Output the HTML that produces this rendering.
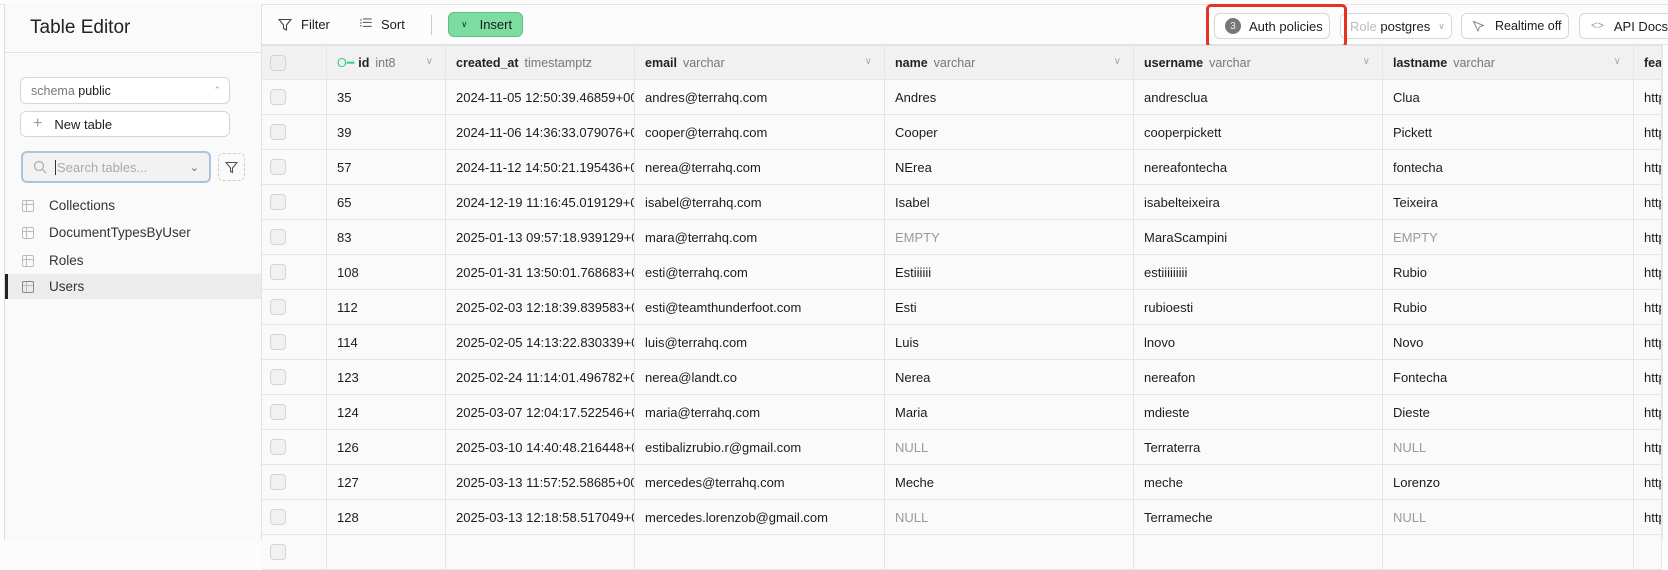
<!DOCTYPE html>
<html><head><meta charset="utf-8"><style>
*{box-sizing:border-box;margin:0;padding:0}
body{width:1668px;height:540px;overflow:hidden;background:#fcfcfc;font-family:"Liberation Sans",sans-serif;color:#1c1c1c;position:relative}
.a{position:absolute}
.topline{left:0;top:4px;width:1668px;height:1px;background:#e4e4e4}
.side{left:4px;top:4px;width:258px;height:536px;border-left:1px solid #dcdcdc;border-right:1px solid #e2e2e2;background:#fafafa}
.btn{position:absolute;border:1px solid #d6d6d6;border-radius:6px;background:#fff;font-size:13px;display:flex;align-items:center;white-space:nowrap}
.grid{position:absolute;left:262px;top:45px;width:1400px}
.r{display:flex;height:35px}
.c{height:35px;border-right:1px solid #e6e6e6;border-bottom:1px solid #e6e6e6;padding:0 10px;white-space:nowrap;overflow:hidden;background:#fafafa;font-size:13px;display:flex;align-items:center;flex:none;position:relative}
.h .c{background:#f1f1f1;font-size:12.5px;border-top:1px solid #e2e2e2}
.h b{color:#222}
.h span{color:#777;margin-left:6px}
.h i{position:absolute;right:12px;top:10px;font-style:normal;color:#aaa;font-size:10px}
.w0{width:65px}.w1{width:119px}.w2{width:189px}.w3{width:250px}.w4{width:249px}.w5{width:249px}.w6{width:251px}.w7{width:28px}
.cb{display:block;width:16px;height:16px;border:1px solid #d4d4d4;border-radius:4px;background:#f1f1f1;margin-left:-2px}
.g{color:#9a9a9a}
.li{position:absolute;left:5px;width:256px;height:25px;font-size:13.5px;display:flex;align-items:center;color:#333}
.ti{width:12px;height:12px;border:1px solid #bbb;border-radius:2px;margin:0 15px 0 17px;position:relative}
.ti:before{content:"";position:absolute;left:0;right:0;top:3px;border-top:1px solid #bbb}
.ti:after{content:"";position:absolute;left:3px;top:0;bottom:0;border-left:1px solid #bbb}
</style></head><body>
<div class="a topline"></div>
<div class="a side">
 <div class="a" style="left:25px;top:13px;font-size:19px;color:#222">Table Editor</div>
 <div class="a" style="left:0;top:48px;width:257px;height:1px;background:#e2e2e2"></div>
 <div class="btn" style="left:15px;top:73px;width:210px;height:27px;padding-left:10px;font-size:12.5px"><span style="color:#777">schema&nbsp;</span>public<span style="position:absolute;right:8px;color:#aaa;font-size:9px">⌃</span></div>
 <div class="btn" style="left:15px;top:107px;width:210px;height:26px;padding-left:12px"><span style="color:#999;font-size:16px;margin-right:12px">+</span>New table</div>
 <div class="btn" style="left:16px;top:147px;width:190px;height:32px;border:2px solid #a9c4dd;background:#f2f2f2;padding-left:10px;color:#aaa"><svg width="14" height="14" viewBox="0 0 14 14"><circle cx="6" cy="6" r="4.5" fill="none" stroke="#aaa" stroke-width="1.2"/><path d="M9.5 9.5L13 13" stroke="#aaa" stroke-width="1.2"/></svg><span style="margin-left:8px;border-left:1px solid #333;padding-left:1px">Search tables...</span><span style="position:absolute;right:10px;font-size:11px;color:#666">⌄</span></div>
 <div class="a" style="left:213px;top:149px;width:27px;height:28px;border:1px dashed #ccc;border-radius:5px;display:flex;align-items:center;justify-content:center"><svg width="13" height="13" viewBox="0 0 13 13"><path d="M1 1.5h11L7.5 7v4.5l-2-1V7z" fill="none" stroke="#555" stroke-width="1.1"/></svg></div>
 <div class="li" style="top:189px;left:0"><div class="ti"></div>Collections</div>
 <div class="li" style="top:216px;left:0"><div class="ti"></div>DocumentTypesByUser</div>
 <div class="li" style="top:244px;left:0"><div class="ti"></div>Roles</div>
 <div class="li" style="top:270px;left:0;background:#ececec;border-left:3px solid #222"><div class="ti" style="margin-left:14px;border-color:#888"></div>Users</div>
</div>
<div class="a" style="left:262px;top:44px;width:1406px;height:1px;background:#e2e2e2"></div>
<svg class="a" style="left:278px;top:18px" width="14" height="14" viewBox="0 0 14 14"><path d="M1 1.5h12L8.5 7v5l-3-1.5V7z" fill="none" stroke="#444" stroke-width="1.1"/></svg>
<div class="a" style="left:301px;top:17px;font-size:13px">Filter</div>
<div class="a" style="left:359px;top:16px;font-size:12px;color:#666;letter-spacing:-1px">⁝☰</div>
<div class="a" style="left:381px;top:17px;font-size:13px">Sort</div>
<div class="a" style="left:431px;top:15px;width:1px;height:20px;background:#ccc"></div>
<div class="btn" style="left:448px;top:12px;width:75px;height:25px;background:#7ddc9f;border-color:#5cbf80;padding-left:12px"><span style="font-size:9px;color:#235;margin-right:12px">∨</span>Insert</div>
<div class="btn" style="left:1214px;top:13px;width:116px;height:26px;padding-left:10px"><span style="width:16px;height:16px;border-radius:50%;background:#777;color:#eee;font-size:10px;display:inline-flex;align-items:center;justify-content:center;margin-right:8px">3</span>Auth policies</div>
<div class="btn" style="left:1340px;top:13px;width:112px;height:26px;padding-left:9px"><span style="color:#bbb">Role&nbsp;</span>postgres<span style="color:#aaa;font-size:9px;margin-left:8px">∨</span></div>
<div class="a" style="left:1206px;top:4px;width:141px;height:44px;border:3px solid #e53224;border-radius:5px"></div>
<div class="btn" style="left:1461px;top:13px;width:108px;height:26px;padding-left:10px;font-size:12.5px"><svg width="13" height="13" viewBox="0 0 13 13"><path d="M1.5 1.5l10 4-4 1.5-1.5 4z" fill="none" stroke="#888" stroke-width="1"/></svg><span style="margin-left:10px">Realtime off</span></div>
<div class="btn" style="left:1579px;top:13px;width:100px;height:26px;padding-left:11px"><span style="color:#999;font-size:11px;margin-right:10px">&lt;&gt;</span>API Docs</div>
<div class="grid">
<div class="r h"><div class="c w0"><span class="cb" style="margin-left:-2px;background:#eee"></span></div><div class="c w1"><span style="color:#3ecf8e;margin:0 4px 0 0">O━</span><b>id</b><span>int8</span><i>∨</i></div><div class="c w2"><b>created_at</b><span>timestamptz</span></div><div class="c w3"><b>email</b><span>varchar</span><i>∨</i></div><div class="c w4"><b>name</b><span>varchar</span><i>∨</i></div><div class="c w5"><b>username</b><span>varchar</span><i>∨</i></div><div class="c w6"><b>lastname</b><span>varchar</span><i>∨</i></div><div class="c w7"><b>fea</b></div></div>
<div class="r"><div class="c w0"><span class="cb"></span></div><div class="c w1">35</div><div class="c w2">2024-11-05 12:50:39.46859+00</div><div class="c w3">andres@terrahq.com</div><div class="c w4">Andres</div><div class="c w5">andresclua</div><div class="c w6">Clua</div><div class="c w7">http</div></div>
<div class="r"><div class="c w0"><span class="cb"></span></div><div class="c w1">39</div><div class="c w2">2024-11-06 14:36:33.079076+00</div><div class="c w3">cooper@terrahq.com</div><div class="c w4">Cooper</div><div class="c w5">cooperpickett</div><div class="c w6">Pickett</div><div class="c w7">http</div></div>
<div class="r"><div class="c w0"><span class="cb"></span></div><div class="c w1">57</div><div class="c w2">2024-11-12 14:50:21.195436+00</div><div class="c w3">nerea@terrahq.com</div><div class="c w4">NErea</div><div class="c w5">nereafontecha</div><div class="c w6">fontecha</div><div class="c w7">http</div></div>
<div class="r"><div class="c w0"><span class="cb"></span></div><div class="c w1">65</div><div class="c w2">2024-12-19 11:16:45.019129+00</div><div class="c w3">isabel@terrahq.com</div><div class="c w4">Isabel</div><div class="c w5">isabelteixeira</div><div class="c w6">Teixeira</div><div class="c w7">http</div></div>
<div class="r"><div class="c w0"><span class="cb"></span></div><div class="c w1">83</div><div class="c w2">2025-01-13 09:57:18.939129+00</div><div class="c w3">mara@terrahq.com</div><div class="c w4 g">EMPTY</div><div class="c w5">MaraScampini</div><div class="c w6 g">EMPTY</div><div class="c w7">http</div></div>
<div class="r"><div class="c w0"><span class="cb"></span></div><div class="c w1">108</div><div class="c w2">2025-01-31 13:50:01.768683+00</div><div class="c w3">esti@terrahq.com</div><div class="c w4">Estiiiiii</div><div class="c w5">estiiiiiiiii</div><div class="c w6">Rubio</div><div class="c w7">http</div></div>
<div class="r"><div class="c w0"><span class="cb"></span></div><div class="c w1">112</div><div class="c w2">2025-02-03 12:18:39.839583+00</div><div class="c w3">esti@teamthunderfoot.com</div><div class="c w4">Esti</div><div class="c w5">rubioesti</div><div class="c w6">Rubio</div><div class="c w7">http</div></div>
<div class="r"><div class="c w0"><span class="cb"></span></div><div class="c w1">114</div><div class="c w2">2025-02-05 14:13:22.830339+00</div><div class="c w3">luis@terrahq.com</div><div class="c w4">Luis</div><div class="c w5">lnovo</div><div class="c w6">Novo</div><div class="c w7">http</div></div>
<div class="r"><div class="c w0"><span class="cb"></span></div><div class="c w1">123</div><div class="c w2">2025-02-24 11:14:01.496782+00</div><div class="c w3">nerea@landt.co</div><div class="c w4">Nerea</div><div class="c w5">nereafon</div><div class="c w6">Fontecha</div><div class="c w7">http</div></div>
<div class="r"><div class="c w0"><span class="cb"></span></div><div class="c w1">124</div><div class="c w2">2025-03-07 12:04:17.522546+00</div><div class="c w3">maria@terrahq.com</div><div class="c w4">Maria</div><div class="c w5">mdieste</div><div class="c w6">Dieste</div><div class="c w7">http</div></div>
<div class="r"><div class="c w0"><span class="cb"></span></div><div class="c w1">126</div><div class="c w2">2025-03-10 14:40:48.216448+00</div><div class="c w3">estibalizrubio.r@gmail.com</div><div class="c w4 g">NULL</div><div class="c w5">Terraterra</div><div class="c w6 g">NULL</div><div class="c w7">http</div></div>
<div class="r"><div class="c w0"><span class="cb"></span></div><div class="c w1">127</div><div class="c w2">2025-03-13 11:57:52.58685+00</div><div class="c w3">mercedes@terrahq.com</div><div class="c w4">Meche</div><div class="c w5">meche</div><div class="c w6">Lorenzo</div><div class="c w7">http</div></div>
<div class="r"><div class="c w0"><span class="cb"></span></div><div class="c w1">128</div><div class="c w2">2025-03-13 12:18:58.517049+00</div><div class="c w3">mercedes.lorenzob@gmail.com</div><div class="c w4 g">NULL</div><div class="c w5">Terrameche</div><div class="c w6 g">NULL</div><div class="c w7">http</div></div>
<div class="r"><div class="c w0"><span class="cb"></span></div><div class="c w1"></div><div class="c w2"></div><div class="c w3"></div><div class="c w4"></div><div class="c w5"></div><div class="c w6"></div><div class="c w7"></div></div>
</div>
<div class="a" style="left:1662px;top:45px;width:6px;height:495px;background:#fff;border-left:1px solid #e6e6e6"></div>
</body></html>
